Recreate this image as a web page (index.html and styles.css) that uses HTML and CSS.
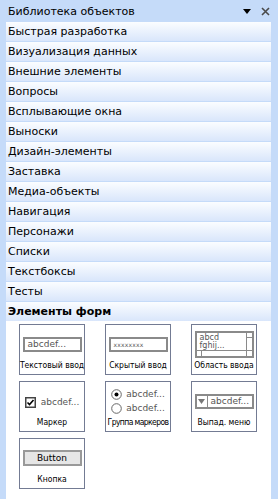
FILE: index.html
```html
<!DOCTYPE html>
<html lang="ru">
<head>
<meta charset="UTF-8" />
<title>Библиотека объектов</title>
<link rel="stylesheet" href="styles.css">
</head>
<body>

<div class="panel">
 <!-- Заголовок панели -->
 <div class="panel-head">
   <span class="panel-title">Библиотека объектов</span>
   <span class="panel-tools">
     <svg width="8" height="5" viewBox="0 0 8 5"><path d="M0 0H8L4 5Z" fill="#000"/></svg>
     <svg width="9" height="9" viewBox="0 0 9 9"><path d="M1 1L8 8M8 1L1 8" stroke="#4a4a4a" stroke-width="1.6"/></svg>
   </span>
 </div>

 <!-- Категории -->
 <div class="cat">Быстрая разработка</div>
 <div class="cat">Визуализация данных</div>
 <div class="cat">Внешние элементы</div>
 <div class="cat">Вопросы</div>
 <div class="cat">Всплывающие окна</div>
 <div class="cat">Выноски</div>
 <div class="cat">Дизайн-элементы</div>
 <div class="cat">Заставка</div>
 <div class="cat">Медиа-объекты</div>
 <div class="cat">Навигация</div>
 <div class="cat">Персонажи</div>
 <div class="cat">Списки</div>
 <div class="cat">Текстбоксы</div>
 <div class="cat">Тесты</div>
 <div class="cat cat-open">Элементы форм</div>

 <!-- Элементы форм -->
 <div class="items">
   <div class="item">
     <div class="preview"><div class="fake-input">abcdef...</div></div>
     <div class="item-name">Текстовый ввод</div>
   </div>
   <div class="item">
     <div class="preview"><div class="fake-input fake-pass">xxxxxxxx</div></div>
     <div class="item-name">Скрытый ввод</div>
   </div>
   <div class="item">
     <div class="preview">
       <div class="fake-area">
         <div class="area-text">abcd<br>fghij...</div>
         <div class="area-vbar"><span></span></div>
         <div class="area-hbar"><span></span><span class="area-corner"></span></div>
       </div>
     </div>
     <div class="item-name">Область ввода</div>
   </div>

   <div class="item">
     <div class="preview">
       <div class="fake-check">
         <svg width="11" height="11" viewBox="0 0 11 11"><rect x="0.75" y="0.75" width="9.5" height="9.5" fill="#fff" stroke="#444" stroke-width="1.5"/><path d="M2.5 5.5L4.5 7.5L8.5 3" fill="none" stroke="#000" stroke-width="1.6"/></svg>
         <span>abcdef...</span>
       </div>
     </div>
     <div class="item-name">Маркер</div>
   </div>
   <div class="item">
     <div class="preview">
       <div class="fake-radios">
         <div class="radio-row"><svg width="11" height="11" viewBox="0 0 11 11"><circle cx="5.5" cy="5.5" r="4.8" fill="#fff" stroke="#666"/><circle cx="5.5" cy="5.5" r="2" fill="#000"/></svg><span>abcdef...</span></div>
         <div class="radio-row"><svg width="11" height="11" viewBox="0 0 11 11"><circle cx="5.5" cy="5.5" r="4.8" fill="#fff" stroke="#666"/></svg><span>abcdef...</span></div>
       </div>
     </div>
     <div class="item-name item-name-tight">Группа маркеров</div>
   </div>
   <div class="item">
     <div class="preview">
       <div class="fake-select">
         <span class="select-btn"><svg width="7" height="5" viewBox="0 0 7 5"><path d="M0 0H7L3.5 5Z" fill="#777"/></svg></span>
         <span>abcdef...</span>
       </div>
     </div>
     <div class="item-name">Выпад. меню</div>
   </div>

   <div class="item">
     <div class="preview"><div class="fake-button">Button</div></div>
     <div class="item-name">Кнопка</div>
   </div>
 </div>
</div>

</body>
</html>
```

FILE: styles.css
```css
/* Общие стили */
* {
  box-sizing: border-box;
  margin: 0;
  padding: 0;
}

body, html {
  height: 100%;
  font-family: "DejaVu Sans", Arial, sans-serif;
  background: #c5dbf9;
}

.panel {
  height: 100%;
  display: flex;
  flex-direction: column;
  padding: 0 7px 0 6px;
}

/* Заголовок */
.panel-head {
  height: 22px;
  display: flex;
  align-items: center;
  justify-content: space-between;
  padding-left: 2px;
  padding-right: 1px;
  font-size: 11px;
  color: #000;
}

.panel-tools {
  display: flex;
  align-items: center;
  gap: 10px;
}

/* Категории */
.cat {
  height: 19px;
  margin-bottom: 1px;
  padding-left: 2px;
  display: flex;
  align-items: center;
  font-size: 11px;
  color: #000;
  background: linear-gradient(#fbfdff, #d9e6fb);
}

.cat-open {
  font-weight: bold;
  margin-bottom: 0;
}

/* Сетка элементов */
.items {
  flex: 1;
  background: #fff;
  display: grid;
  grid-template-columns: repeat(3, 66px);
  grid-auto-rows: 51px;
  column-gap: 20px;
  row-gap: 6px;
  padding: 3px 0 0 13px;
  align-content: start;
}

.item {
  border: 1px solid #737b93;
  display: flex;
  flex-direction: column;
  align-items: center;
}

.preview {
  height: 34px;
  display: flex;
  align-items: center;
  justify-content: center;
  width: 100%;
}

.item-name {
  font-family: "DejaVu Sans Condensed", "DejaVu Sans", sans-serif;
  font-size: 8.5px;
  line-height: 11px;
  color: #000;
  margin-top: 1px;
  white-space: nowrap;
}

.item-name-tight {
  letter-spacing: -0.6px;
}

/* Поле ввода */
.fake-input {
  width: 59px;
  height: 15px;
  border: 2px solid #8a8a8a;
  font-size: 9px;
  color: #555;
  padding-left: 3px;
  line-height: 11px;
  margin-top: 4px;
}

.fake-pass {
  font-size: 6px;
  letter-spacing: 0.2px;
}

/* Область ввода */
.fake-area {
  width: 59px;
  height: 27px;
  border: 2px solid #8a8a8a;
  position: relative;
  margin-top: 4px;
}

.area-text {
  font-size: 8px;
  line-height: 8px;
  color: #555;
  padding: 1px 0 0 3px;
}

.area-vbar {
  position: absolute;
  right: 0;
  top: 0;
  bottom: 6px;
  width: 6px;
  border-left: 1px solid #8a8a8a;
}

.area-vbar span {
  display: block;
  height: 5px;
  border-bottom: 1px solid #8a8a8a;
}

.area-hbar {
  position: absolute;
  left: 0;
  right: 0;
  bottom: 0;
  height: 6px;
  border-top: 1px solid #8a8a8a;
}

.area-hbar span:first-child {
  position: absolute;
  left: 4px;
  top: 0;
  bottom: 0;
  border-left: 1px solid #8a8a8a;
}

.area-corner {
  position: absolute;
  right: 0;
  top: 0;
  width: 6px;
  height: 5px;
  border-left: 1px solid #8a8a8a;
}

/* Маркер */
.fake-check {
  display: flex;
  align-items: center;
  gap: 5px;
  font-size: 9px;
  color: #555;
  margin-top: 6px;
}

.fake-radios {
  display: flex;
  flex-direction: column;
  gap: 3px;
  font-size: 9px;
  color: #555;
  margin-top: 4px;
}

.radio-row {
  display: flex;
  align-items: center;
  gap: 4px;
}

/* Выпадающее меню */
.fake-select {
  width: 59px;
  height: 15px;
  border: 2px solid #8a8a8a;
  display: flex;
  align-items: center;
  font-size: 9px;
  color: #555;
  margin-top: 4px;
}

.select-btn {
  width: 11px;
  height: 100%;
  border-right: 1px solid #8a8a8a;
  display: flex;
  align-items: center;
  justify-content: center;
  margin-right: 3px;
}

/* Кнопка */
.fake-button {
  width: 59px;
  height: 16px;
  border: 2px solid #999;
  background: #e6e6e6;
  font-size: 9px;
  color: #000;
  text-align: center;
  line-height: 12px;
  margin-top: 4px;
}
```
